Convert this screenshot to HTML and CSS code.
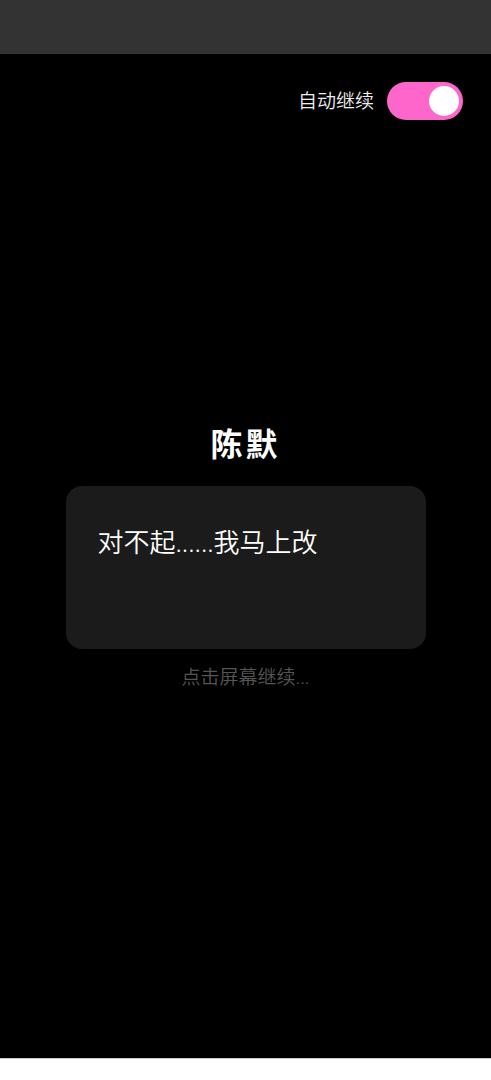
FILE: index.html
```html
<!DOCTYPE html>
<html lang="zh-CN">
<head>
    <meta charset="UTF-8">
    <meta name="viewport" content="width=device-width, initial-scale=1.0">
    <title>陈默</title>
    <link rel="stylesheet" href="styles.css">
</head>
<body>
    <div class="status-bar"></div>
    <main class="screen">
        <div class="toolbar">
            <label for="autoPlay">自动继续</label>
            <input type="checkbox" id="autoPlay" class="switch" role="switch" checked>
        </div>
        <div class="dialogue">
            <h1 class="speaker">陈默</h1>
            <p class="message">对不起......我马上改</p>
            <p class="hint">点击屏幕继续...</p>
        </div>
    </main>
</body>
</html>
```
FILE: styles.css
```css
* {
    box-sizing: border-box;
}
body {
    margin: 0;
    min-height: 100vh;
    padding-bottom: 21px;
    display: flex;
    flex-direction: column;
    background-color: #fff;
    color: #fff;
    font-family: "Noto Sans", "Noto Sans CJK SC", sans-serif;
    font-weight: 350;
}
.status-bar {
    height: 54px;
    background-color: #333;
}
.screen {
    flex: 1;
    display: flex;
    flex-direction: column;
    padding: 28px;
    border-bottom: 1px solid #ccc;
    background-color: #000;
}
.toolbar {
    display: flex;
    justify-content: flex-end;
    align-items: center;
    gap: 13px;
    height: 38px;
    font-size: 19px;
    line-height: 28px;
    color: #eee;
}
.switch {
    appearance: none;
    width: 76px;
    height: 38px;
    margin: 0;
    padding: 4px;
    display: flex;
    border-radius: 19px;
    background-color: #ccc;
    cursor: pointer;
}
.switch::before {
    content: "";
    width: 30px;
    height: 30px;
    border-radius: 50%;
    background-color: #fff;
}
.switch:checked {
    justify-content: flex-end;
    background-color: #ff66cc;
}
.dialogue {
    flex: 1;
    display: flex;
    flex-direction: column;
    justify-content: center;
    align-items: center;
    padding-bottom: 40px;
}
.speaker {
    margin: 0 0 18px;
    font-size: 32px;
    line-height: 48px;
    letter-spacing: 3px;
}
.message {
    width: 100%;
    max-width: 360px;
    min-height: 163px;
    margin: 0 0 14px;
    padding: 36px 32px;
    border-radius: 16px;
    background-color: #1b1b1b;
    font-size: 26px;
    line-height: 40px;
}
.hint {
    margin: 0;
    font-size: 19px;
    line-height: 28px;
    color: #555;
}
```
